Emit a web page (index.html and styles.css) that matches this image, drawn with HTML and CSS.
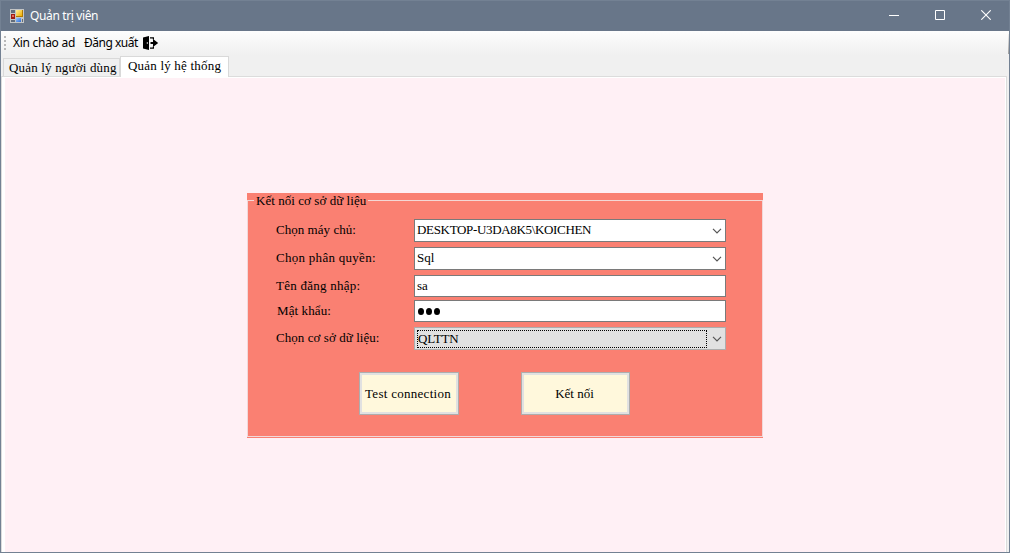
FILE: index.html
```
<!DOCTYPE html>
<html lang="vi">
<head>
<meta charset="utf-8">
<title>Quản trị viên</title>
<link rel="stylesheet" href="styles.css">
</head>
<body>
<div class="window">
  <header class="titlebar">
    <svg class="app-icon" width="14" height="14" viewBox="0 0 14 14" shape-rendering="crispEdges">
      <defs>
        <linearGradient id="gold" x2="1" y2="1"><stop offset="0" stop-color="#fff2a0"/><stop offset="1" stop-color="#f0ad00"/></linearGradient>
        <linearGradient id="blue" x2="1" y2="1"><stop offset="0" stop-color="#9cc8ff"/><stop offset="1" stop-color="#2c6bd4"/></linearGradient>
      </defs>
      <path fill="#c3c5c5" d="M0 0h14v14H0z"/>
      <path fill="#626d7c" d="M1 1h4v3H1zM1 11h4v2H1zM12 10h1v3h-1z"/>
      <path fill="#9f1c14" d="M1 5h4v5H1z"/><path fill="#e76b58" d="M2 6h2v2H2z"/>
      <path fill="#b27b00" d="M6 1h7v7H6z"/><path fill="url(#gold)" d="M6 1h6v6H6z"/>
      <path fill="url(#blue)" d="M6 9h5v4H6z"/>
    </svg>
    <h1 class="title">Quản trị viên</h1>
    <div class="controls">
      <svg width="10" height="10" shape-rendering="crispEdges"><path fill="#fff" d="M0 5h10v1H0z"/></svg>
      <svg width="10" height="10"><path fill="none" stroke="#fff" d="M.5.5h9v9h-9z"/></svg>
      <svg width="10" height="10"><path fill="none" stroke="#fff" stroke-width="1.1" d="M.3.3l9.4 9.4M9.7.3L.3 9.7"/></svg>
    </div>
  </header>
  <nav class="toolbar">
    <span class="grip"><i></i><i></i><i></i><i></i></span>
    <span class="greeting">Xin chào ad</span>
    <span class="logout">Đăng xuất</span>
    <svg class="exit-icon" width="16" height="14" viewBox="0 0 16 14">
      <path d="M0 1.5L6 0v14L0 12.5z"/>
      <path d="M7 1.2h4V3.5H9.8V2.6H7zM7 12.8h4v-2.3H9.8v.9H7z"/>
      <path d="M7.5 6H10V3l5.2 4L10 11V8H7.5z"/>
      <path fill="#fff" d="M3.8 6.2h1v1.6h-1z"/>
    </svg>
    <i class="overflow"></i>
  </nav>
  <div class="tabs">
    <div class="tab">Quản lý người dùng</div>
    <div class="tab active">Quản lý hệ thống</div>
  </div>
  <main class="page">
    <div class="surface">
      <section class="group">
        <div class="legend"><i class="stub"></i><span>Kết nối cơ sở dữ liệu</span><i class="rule"></i></div>
        <div class="group-body">
          <form class="form">
            <div class="row"><label class="l1">Chọn máy chủ:</label><div class="field combo"><span class="server">DESKTOP-U3DA8K5\KOICHEN</span><svg class="chevron" width="10" height="6"><path d="M1 .8l4 4 4-4"/></svg></div></div>
            <div class="row"><label class="l2">Chọn phân quyền:</label><div class="field combo"><span>Sql</span><svg class="chevron" width="10" height="6"><path d="M1 .8l4 4 4-4"/></svg></div></div>
            <div class="row short"><label class="l3">Tên đăng nhập:</label><div class="field text"><span>sa</span></div></div>
            <div class="row short password"><label class="l4">Mật khẩu:</label><div class="field text"><span class="dots"><i></i><i></i><i></i></span></div></div>
            <div class="row last"><label class="l5">Chọn cơ sở dữ liệu:</label><div class="field combo flat"><span class="focus">QLTTN</span><svg class="chevron" width="10" height="6"><path d="M1 .8l4 4 4-4"/></svg></div></div>
          </form>
          <div class="actions">
            <button class="btn test" type="button">Test connection</button>
            <button class="btn connect" type="button">Kết nối</button>
          </div>
        </div>
      </section>
    </div>
  </main>
</div>
</body>
</html>
```
FILE: styles.css
```
* { box-sizing: border-box; }
body { margin: 0; font: 13px/16px "Liberation Serif", "Times New Roman", serif; color: #000; }
svg { display: block; flex: none; }
.window { width: 1010px; height: 553px; border: 1px solid #738193; background: #f0f0f0; display: flex; flex-direction: column; overflow: hidden; }
.titlebar { height: 30px; flex: none; background: #687689; display: flex; align-items: center; padding-left: 9px; }
.app-icon { margin-top: -1px; }
.title { margin: 0 auto 0 6px; font: 12px/16px "Noto Sans", sans-serif; color: #fff; white-space: nowrap; letter-spacing: -.37px; }
.controls { display: flex; gap: 36px; padding-right: 18px; }
.controls svg { margin-top: -2px; }
.toolbar { height: 24px; flex: none; background: linear-gradient(#fdfdfd, #f0f0f0); display: flex; align-items: center; padding-left: 3px; font: 12px/16px "Noto Sans", sans-serif; white-space: nowrap; }
.grip { display: flex; flex-direction: column; gap: 2px; width: 2px; margin-right: 7px; }
.grip i { width: 2px; height: 2px; background: #b8b8b8; }
.greeting { width: 71px; letter-spacing: -.28px; }
.logout { width: 59px; letter-spacing: -.5px; }
.overflow { margin: 2px 0 0 auto; width: 1px; height: 20px; background: linear-gradient(#f0f0f0, #a0a0a0); }
.tabs { height: 22px; flex: none; display: flex; align-items: flex-start; padding: 1px 0 0 2px; margin-bottom: -1px; position: relative; }
.tab { height: 18px; width: 117px; margin-top: 2px; border: 1px solid #d9d9d9; border-bottom: 0; background: #f0f0f0; padding: 1px 0 0 5px; white-space: nowrap; overflow: hidden; letter-spacing: .17px; }
.tab.active { width: 109px; height: 21px; margin-top: 0; background: #fff; padding: 1px 0 0 7px; letter-spacing: .2px; }
.page { flex: 1; margin-right: 2px; border: 1px solid #dcdcdc; border-width: 1px 1px 0; background: #fff; padding: 1px 1px 0 3px; display: flex; }
.surface { flex: 1; background: #fff0f5; padding: 115px 0 0 242px; }
.group { width: 516px; height: 245px; background: #fa8072; display: flex; flex-direction: column; }
.legend { height: 8px; flex: none; display: flex; align-items: flex-end; white-space: nowrap; }
.legend .stub, .legend .rule { height: 1px; background: #f4d7d5; }
.legend .stub { width: 7px; }
.legend span { width: 114px; height: 8px; line-height: 16px; padding-left: 2px; letter-spacing: .05px; }
.legend .rule { flex: 1; }
.group-body { height: 236px; border: 1px solid #f1d9da; border-top: 0; padding: 18px 0 0 28px; }
.row { display: flex; height: 23px; margin-bottom: 5px; white-space: nowrap; }
.row label { width: 138px; padding-top: 3px; }
.row .l1 { letter-spacing: .04px; }
.row .l2 { letter-spacing: .28px; }
.row .l3 { letter-spacing: .25px; }
.row .l4 { letter-spacing: .1px; }
.row .l5 { letter-spacing: .06px; }
.row.short { height: 22px; margin-bottom: 3px; }
.row.password { margin-bottom: 5px; }
.row.password label { padding-left: 1px; }
.field { width: 312px; height: 100%; border: 1px solid #7a7a7a; background: #fff; padding: 2px 3px 0 2px; display: flex; justify-content: space-between; }
.server { letter-spacing: -.33px; }
.chevron { margin-top: 6px; }
.chevron path { fill: none; stroke: #555; stroke-width: 1.2; }
.flat { background: #e1e1e1; border-color: #adadad; }
.focus { width: 290px; height: 18px; outline: 1px dotted #000; outline-offset: -1px; padding: 1px 0 0 1px; letter-spacing: -.2px; }
.dots { display: flex; gap: 2px; padding: 5px 0 0 1px; }
.dots i { width: 6px; height: 7px; border-radius: 50%; background: #000; }
.actions { display: flex; gap: 62px; margin-top: 22px; padding-left: 83px; }
.btn { height: 43px; padding: 0; border: 1px solid #adadad; box-shadow: inset 0 0 0 2px #e1e1e1; background: #fff8dc; font: inherit; color: #000; white-space: nowrap; }
.test { width: 100px; letter-spacing: .28px; padding-right: 2px; }
.connect { width: 109px; padding-right: 2px; }
```
